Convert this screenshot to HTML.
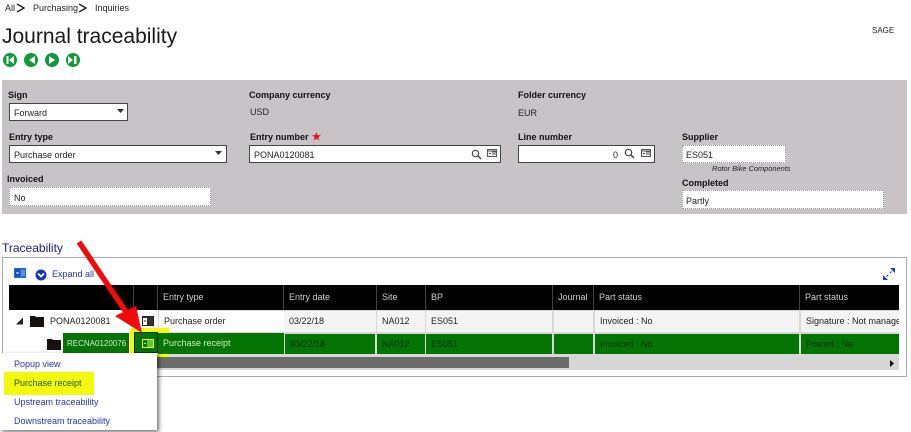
<!DOCTYPE html>
<html><head><meta charset="utf-8"><style>
html,body{margin:0;padding:0;background:#fff}
#p{position:relative;width:911px;height:432px;overflow:hidden;background:#fff;font-family:"Liberation Sans",sans-serif;font-size:9px;color:#222}
#p div,#p svg{position:absolute}
.t{white-space:nowrap;line-height:12px}
.l{font-weight:bold;color:#111;white-space:nowrap;line-height:12px;font-size:9px}
.box{background:#fff;border:1px solid #444;box-sizing:border-box}
.ro{background:#fff;outline:1px dotted #999;outline-offset:-1px}
.h{background:#000;top:285px;height:25px;border-right:1px solid #3a4a3a;box-sizing:border-box;color:#cfcfcf;line-height:25px;padding-left:5px;white-space:nowrap}
.c1{top:311px;height:21px;background:#f4f4f4;line-height:21px;padding-left:5px;box-sizing:border-box;color:#222;white-space:nowrap;overflow:hidden}
.c2{top:334px;height:20px;background:#047404;line-height:20px;padding-left:5px;box-sizing:border-box;color:#0a2e0a;white-space:nowrap;overflow:hidden}
.m{color:#2338a8;white-space:nowrap;line-height:12px;left:14px}
</style></head><body><div id="p">
<div class="t" style="left:5px;top:2px">All</div>
<svg style="left:16px;top:3px" width="10" height="10" viewBox="0 0 10 10"><path d="M1 1L8 5L1 9" fill="none" stroke="#222" stroke-width="1.4"/></svg>
<div class="t" style="left:33px;top:2px">Purchasing</div>
<svg style="left:78px;top:3px" width="10" height="10" viewBox="0 0 10 10"><path d="M1 1L8 5L1 9" fill="none" stroke="#222" stroke-width="1.4"/></svg>
<div class="t" style="left:95px;top:2px">Inquiries</div>
<div class="t" style="left:2px;top:24px;font-size:21px;line-height:26px;color:#1a1a1a;letter-spacing:0">Journal traceability</div>
<div class="t" style="left:872px;top:25px;font-size:8px">SAGE</div>

<svg style="left:2px;top:53px" width="80" height="14" viewBox="0 0 80 14">
<g fill="#0f9a3c"><circle cx="8" cy="7" r="7"/><circle cx="29" cy="7" r="7"/><circle cx="50" cy="7" r="7"/><circle cx="71" cy="7" r="7"/></g>
<g fill="#fff"><path d="M4.500 3h2v8h-2zM12 3v8L7 7zM33 3v8l-6-4zM47 3l6 4-6 4zM66 3l5 4-5 4zM72 3h2.500v8H72z"/></g>
</svg>

<div style="left:2px;top:80px;width:905px;height:134px;background:#c8c3c6"></div>

<div class="l" style="left:8px;top:89px">Sign</div>
<div class="box" style="left:9px;top:103px;width:119px;height:18px"></div>
<div class="t" style="left:14px;top:107px">Forward</div>
<svg style="left:117px;top:109px" width="8" height="5"><path d="M0 0h7L3.500 4z" fill="#333"/></svg>

<div class="l" style="left:249px;top:89px">Company currency</div>
<div class="t" style="left:250px;top:106px">USD</div>
<div class="l" style="left:518px;top:89px">Folder currency</div>
<div class="t" style="left:518px;top:107px">EUR</div>

<div class="l" style="left:9px;top:131px">Entry type</div>
<div class="box" style="left:9px;top:145px;width:218px;height:18px"></div>
<div class="t" style="left:14px;top:149px">Purchase order</div>
<svg style="left:215px;top:151px" width="8" height="5"><path d="M0 0h7L3.500 4z" fill="#333"/></svg>

<div class="l" style="left:250px;top:131px">Entry number</div>
<svg style="left:312px;top:132px" width="9" height="9" viewBox="0 0 10 10"><path d="M5 0l1.300 3.500H10L7 5.800 8.100 9.500 5 7.300 1.900 9.500 3 5.800 0 3.500h3.700z" fill="#f01010"/></svg>
<div class="box" style="left:249px;top:145px;width:252px;height:18px"></div>
<div class="t" style="left:254px;top:149px">PONA0120081</div>
<svg style="left:471px;top:149px" width="11" height="11" viewBox="0 0 11 11"><circle cx="4.500" cy="4.500" r="3.200" fill="none" stroke="#444" stroke-width="1.200"/><path d="M7 7l3 3" stroke="#444" stroke-width="1.500"/></svg>
<svg style="left:487px;top:149px" width="10" height="8" viewBox="0 0 10 8"><rect x=".5" y=".5" width="9" height="7" fill="#eee" stroke="#555"/><path d="M1 2h8M5 3h4M5 5h4M2 4.500h2" stroke="#555"/></svg>

<div class="l" style="left:518px;top:131px">Line number</div>
<div class="box" style="left:518px;top:145px;width:137px;height:18px"></div>
<div class="t" style="left:613px;top:149px">0</div>
<svg style="left:624px;top:148px" width="11" height="11" viewBox="0 0 11 11"><circle cx="4.500" cy="4.500" r="3.200" fill="none" stroke="#444" stroke-width="1.200"/><path d="M7 7l3 3" stroke="#444" stroke-width="1.500"/></svg>
<svg style="left:641px;top:149px" width="10" height="8" viewBox="0 0 10 8"><rect x=".5" y=".5" width="9" height="7" fill="#eee" stroke="#555"/><path d="M1 2h8M5 3h4M5 5h4M2 4.500h2" stroke="#555"/></svg>

<div class="l" style="left:682px;top:131px">Supplier</div>
<div class="ro" style="left:682px;top:145px;width:104px;height:18px"></div>
<div class="t" style="left:686px;top:149px">ES051</div>
<div class="t" style="left:712px;top:163px;font-size:7.400px;font-style:italic;color:#222">Rotor Bike Components</div>
<div class="l" style="left:682px;top:177px">Completed</div>
<div class="ro" style="left:682px;top:190px;width:202px;height:19px"></div>
<div class="t" style="left:686px;top:195px">Partly</div>

<div class="l" style="left:7px;top:173px">Invoiced</div>
<div class="ro" style="left:9px;top:187px;width:202px;height:19px"></div>
<div class="t" style="left:14px;top:192px">No</div>

<div class="t" style="left:2px;top:241px;font-size:12px;line-height:15px;color:#1a1a8c">Traceability</div>
<div style="left:2px;top:257px;width:905px;height:120px;border:1px solid #aaa;box-sizing:border-box"></div>

<svg style="left:14px;top:268px" width="12" height="10" viewBox="0 0 12 10"><rect width="12" height="10" fill="#1f6fd8"/><rect x="1" y="1" width="5" height="8" fill="#1850b0"/><path d="M2 5h3" stroke="#fff"/><path d="M7 3h4M7 5h4M7 7h4" stroke="#bcd" stroke-width=".8"/></svg>
<svg style="left:35px;top:269px" width="12" height="12" viewBox="0 0 12 12"><circle cx="6" cy="6" r="5.500" fill="#1538b0"/><path d="M3 4.500L6 7.500L9 4.500" fill="none" stroke="#fff" stroke-width="1.700"/></svg>
<div class="t" style="left:52px;top:268px;color:#2338a8">Expand all</div>
<svg style="left:882px;top:267px" width="14" height="14" viewBox="0 0 14 14"><path d="M1 13V8l5 5zM13 1v5L8 1z" fill="#1840c0"/><path d="M4.500 9.500L6 8M8 6l1.500-1.500" stroke="#1840c0" stroke-width="1.200"/></svg>

<div class="h" style="left:9px;width:125px"></div>
<div class="h" style="left:134px;width:24px"></div>
<div class="h" style="left:158px;width:126px">Entry type</div>
<div class="h" style="left:284px;width:93px">Entry date</div>
<div class="h" style="left:377px;width:49px">Site</div>
<div class="h" style="left:426px;width:127px">BP</div>
<div class="h" style="left:553px;width:41px">Journal</div>
<div class="h" style="left:594px;width:206px;padding-left:5px">Part status</div>
<div class="h" style="left:800px;width:99px;border:0">Part status</div>

<div style="left:158px;top:310px;width:741px;height:47px;background:#d8d8d8"></div>
<svg style="left:16px;top:317px" width="8" height="8"><path d="M0 7.500L7 .5V7.500z" fill="#222"/></svg>
<svg style="left:30px;top:315px" width="14" height="12" viewBox="0 0 14 12"><path d="M0 1h5l1 1h8v10H0z" fill="#151210"/></svg>
<div class="t" style="left:50px;top:315px">PONA0120081</div>
<div style="left:135px;top:311px;width:23px;height:21px;background:#fff"></div>
<svg style="left:142px;top:316px" width="12" height="10" viewBox="0 0 12 10"><rect x=".5" y=".5" width="11" height="9" fill="#333" stroke="#222"/><rect x="1" y="2" width="4" height="7" fill="#fff"/><path d="M2 5h2" stroke="#222"/></svg>
<div class="c1" style="left:159px;width:125px;background:#fff">Purchase order</div>
<div class="c1" style="left:284px;width:92px">03/22/18</div>
<div class="c1" style="left:377px;width:48px">NA012</div>
<div class="c1" style="left:426px;width:126px">ES051</div>
<div class="c1" style="left:554px;width:39px"></div>
<div class="c1" style="left:595px;width:204px">Invoiced : No</div>
<div class="c1" style="left:801px;width:98px">Signature : Not manage</div>

<svg style="left:47px;top:338px" width="14" height="12" viewBox="0 0 14 12"><path d="M0 1h5l1 1h8v10H0z" fill="#151210"/></svg>
<div style="left:63px;top:333px;width:66px;height:21px;background:#047404;color:#d8e8d8;line-height:21px;padding-left:4px;box-sizing:border-box;white-space:nowrap;font-size:8px">RECNA0120076</div>

<div style="left:130px;top:328px;width:39px;height:29px;background:#f4f80a"></div>
<div style="left:134px;top:332px;width:24px;height:21px;background:#047404;border:1px solid #033;box-sizing:border-box"></div>
<svg style="left:142px;top:339px" width="12" height="9" viewBox="0 0 12 9"><rect x=".5" y=".5" width="11" height="8" fill="#047404" stroke="#eef20a"/><rect x="5" y="1" width="6" height="7" fill="#5cc83c"/><path d="M2 4.500h2" stroke="#eef20a"/></svg>
<div class="c2" style="left:158px;top:333px;width:126px;height:21px;color:#d8f0b0">Purchase receipt</div>
<div class="c2" style="left:285px;width:90px">03/22/18</div>
<div class="c2" style="left:377px;width:48px">NA012</div>
<div class="c2" style="left:426px;width:126px">ES051</div>
<div class="c2" style="left:554px;width:39px"></div>
<div class="c2" style="left:595px;width:204px">Invoiced : No</div>
<div class="c2" style="left:801px;width:98px">Posted : No</div>

<div style="left:9px;top:357px;width:890px;height:13px;background:#d6d6d6"></div>
<div style="left:9px;top:357px;width:560px;height:11px;background:#6b6b6b"></div>
<svg style="left:890px;top:360px" width="5" height="7"><path d="M0 0l4 3.500L0 7z" fill="#111"/></svg>

<div style="left:0;top:353px;width:157px;height:77px;background:#fff;box-shadow:2px 2px 4px rgba(0,0,0,.55)"></div>
<div style="left:4px;top:372px;width:90px;height:23px;background:#f4f80a"></div>
<div class="m" style="top:358px">Popup view</div>
<div class="m" style="top:377px;color:#1a5a1a">Purchase receipt</div>
<div class="m" style="top:396px">Upstream traceability</div>
<div class="m" style="top:415px">Downstream traceability</div>

<svg style="left:70px;top:235px" width="85" height="110" viewBox="70 235 85 110"><path d="M79 242L126 312" stroke="#f40a0a" stroke-width="5.500" fill="none"/><path d="M115 316L136 306L142 333z" fill="#f40a0a"/></svg>
</div></body></html>
